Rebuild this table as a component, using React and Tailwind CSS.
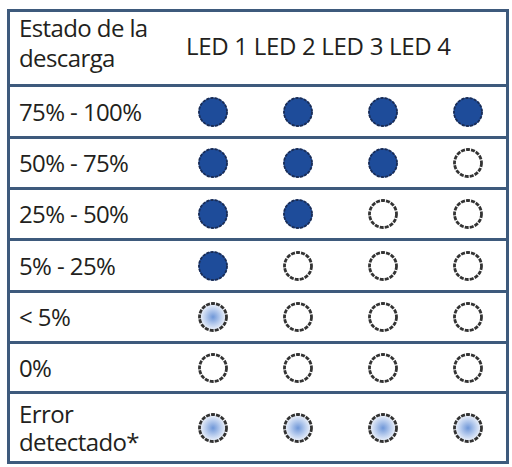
import React from "react";

const FONT = { fontFamily: '"Open Sans", "Liberation Sans", sans-serif' };

function Led({ type }) {
  return (
    <svg width="32" height="32" viewBox="0 0 32 32" className="shrink-0">
      <defs>
        <radialGradient id="dimg" cx="50%" cy="50%" r="50%">
          <stop offset="0%" stopColor="#6f97d8" />
          <stop offset="55%" stopColor="#b9cdee" />
          <stop offset="100%" stopColor="#f2f5fb" />
        </radialGradient>
      </defs>
      {type === "on" && (
        <>
          <circle cx="16" cy="16" r="14.5" fill="#1e4c9a" />
          <circle cx="16" cy="16" r="14" fill="none" stroke="#1b2d55" strokeWidth="1.8" strokeDasharray="3 1.2" />
        </>
      )}
      {type === "off" && (
        <circle cx="16" cy="16" r="13.5" fill="#ffffff" stroke="#333333" strokeWidth="2.8" strokeDasharray="4 1.1" />
      )}
      {type === "dim" && (
        <circle cx="16" cy="16" r="13.5" fill="url(#dimg)" stroke="#333333" strokeWidth="2.8" strokeDasharray="4 1.1" />
      )}
    </svg>
  );
}

const rows = [
  { label: "75% - 100%", leds: ["on", "on", "on", "on"], h: "h-[52px]" },
  { label: "50% - 75%", leds: ["on", "on", "on", "off"], h: "h-[51px]" },
  { label: "25% - 50%", leds: ["on", "on", "off", "off"], h: "h-[51px]" },
  { label: "5% - 25%", leds: ["on", "off", "off", "off"], h: "h-[52px]" },
  { label: "< 5%", leds: ["dim", "off", "off", "off"], h: "h-[51px]" },
  { label: "0%", leds: ["off", "off", "off", "off"], h: "h-[50px]" },
];

export default function App() {
  return (
    <div className="w-[512px] h-[467px] bg-white pt-[9px] pl-[7px] text-[#231f20]" style={FONT}>
      <div className="w-[502px] h-[455px] border-[3px] border-[#3e5a7c] flex flex-col">
        <div className="h-[75px] border-b-[3px] border-[#3e5a7c] flex items-start shrink-0">
          <div className="w-[176px] pl-[9px] pt-[1px] text-[24px] leading-[30px] tracking-[-0.6px]">
            Estado de la
            <br />
            descarga
          </div>
          <div className="text-[24px] leading-[30px] tracking-[-0.3px] pt-[19px] whitespace-nowrap">
            LED 1 LED 2 LED 3 LED 4
          </div>
        </div>
        {rows.map((r) => (
          <div
            key={r.label}
            className={`${r.h} border-b-[3px] border-[#3e5a7c] flex items-center shrink-0`}
          >
            <div className="w-[187px] pl-[9px] text-[24px] leading-[30px] tracking-[-0.6px] whitespace-nowrap">
              {r.label}
            </div>
            <div className="flex gap-[53px]">
              {r.leds.map((l, i) => (
                <Led key={i} type={l} />
              ))}
            </div>
          </div>
        ))}
        <div className="flex-1 flex items-center">
          <div className="w-[187px] pl-[9px] text-[24px] leading-[28px] tracking-[-0.6px]">
            Error
            <br />
            detectado*
          </div>
          <div className="flex gap-[53px]">
            {["dim", "dim", "dim", "dim"].map((l, i) => (
              <Led key={i} type={l} />
            ))}
          </div>
        </div>
      </div>
    </div>
  );
}
